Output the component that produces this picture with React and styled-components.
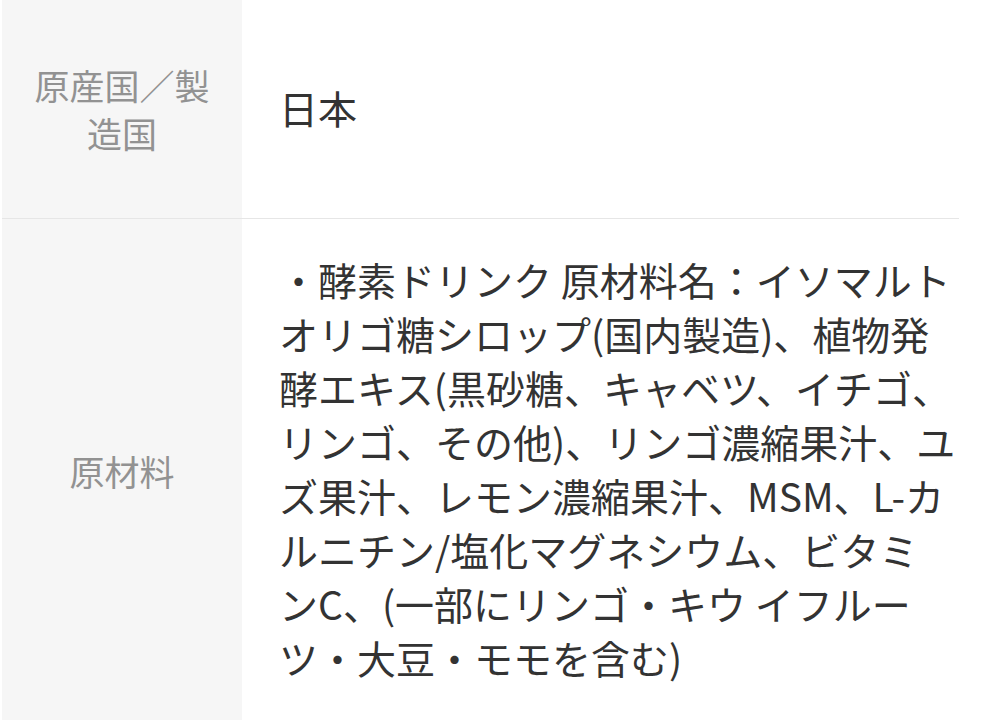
import styled, { createGlobalStyle } from "styled-components"

const GlobalStyle = createGlobalStyle`
  body {
    margin: 0;
    background: #fff;
    font-family: "Noto Sans CJK JP", "Noto Sans", sans-serif;
  }
`

const specs = [
  {
    label: ["原産国／製", "造国"],
    value: ["日本"],
  },
  {
    label: ["原材料"],
    value: [
      "・酵素ドリンク 原材料名：イソマルト",
      "オリゴ糖シロップ(国内製造)、植物発",
      "酵エキス(黒砂糖、キャベツ、イチゴ、",
      "リンゴ、その他)、リンゴ濃縮果汁、ユ",
      "ズ果汁、レモン濃縮果汁、MSM、L-カ",
      "ルニチン/塩化マグネシウム、ビタミ",
      "ンC、(一部にリンゴ・キウ イフルー",
      "ツ・大豆・モモを含む)",
    ],
  },
]

const App = () => {
  return (
    <>
      <GlobalStyle />
      <Table>
        {specs.map((row, i) => (
          <Row key={i} $last={i === specs.length - 1}>
            <Label>
              {row.label.map((line) => (
                <Line key={line}>{line}</Line>
              ))}
            </Label>
            <Value>
              {row.value.map((line) => (
                <Line key={line}>{line}</Line>
              ))}
            </Value>
          </Row>
        ))}
      </Table>
    </>
  )
}

export default App

const Table = styled.div`
  width: 957px;
  margin-left: 2px;
`

const Row = styled.div`
  display: grid;
  grid-template-columns: 240px 1fr;
  border-bottom: ${(p) => (p.$last ? "none" : "1px solid #e6e6e6")};
`

const Label = styled.div`
  background: #f6f6f6;
  color: #929292;
  font-size: 35px;
  line-height: 48px;
  text-align: center;
  padding: 61px 10px;
  display: flex;
  flex-direction: column;
  justify-content: center;
`

const Value = styled.div`
  color: #333;
  font-size: 39px;
  line-height: 54px;
  padding: 33px 0 38px 37px;
  display: flex;
  flex-direction: column;
  justify-content: center;
  white-space: nowrap;
`

const Line = styled.span`
  display: block;
`
